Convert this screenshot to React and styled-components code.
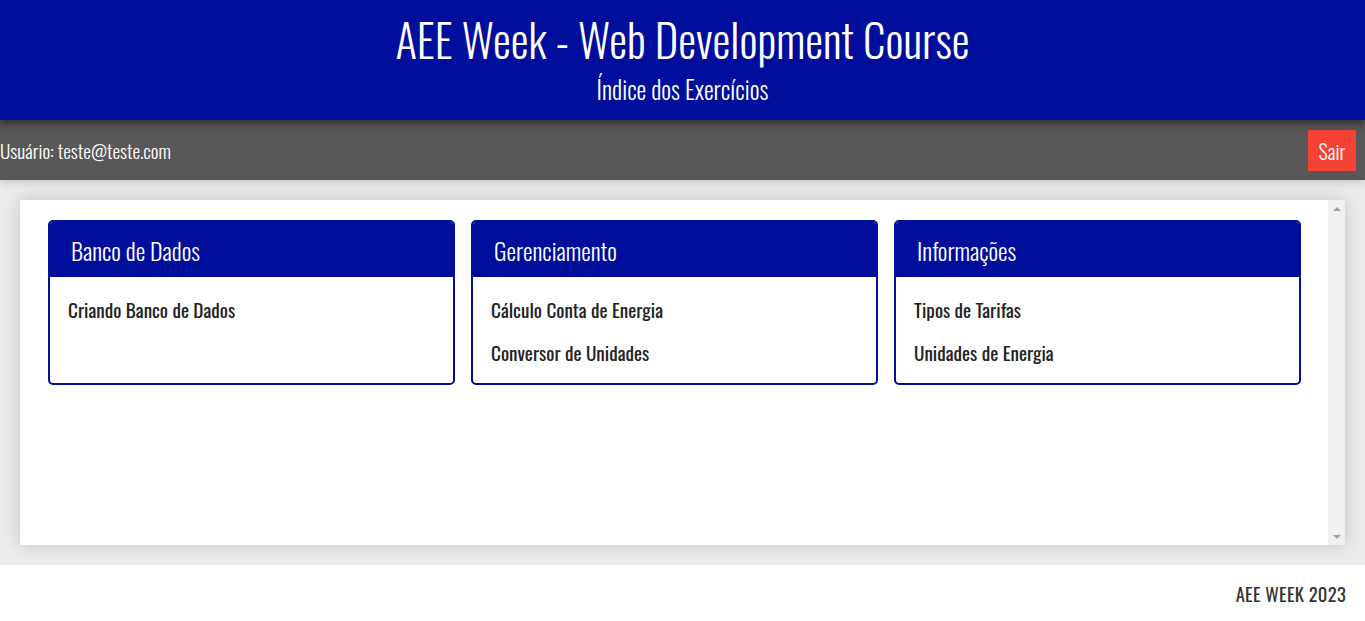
import React from 'react';
import styled, { createGlobalStyle } from 'styled-components';

const GlobalStyle = createGlobalStyle`
  html, body {
    margin: 0;
    padding: 0;
    height: 100%;
  }
  body {
    font-family: Oswald, "Liberation Sans Narrow", "DejaVu Sans Condensed", "DejaVu Sans", sans-serif;
    background: #fff;
  }
  #root {
    height: 100%;
  }
`;

const Page = styled.div`
  display: flex;
  flex-direction: column;
  height: 100vh;
`;

const Header = styled.header`
  position: relative;
  z-index: 2;
  height: 120px;
  background: #000e9c;
  color: #fff;
  display: flex;
  flex-direction: column;
  align-items: center;
  box-shadow: 0 4px 8px rgba(0, 0, 0, 0.45);
`;

const Title = styled.h1`
  margin: 11px 0 0;
  font-size: 45px;
  font-weight: 300;
  line-height: 56px;
`;

const Subtitle = styled.h2`
  margin: 7px 0 0;
  font-size: 24.5px;
  font-weight: 300;
  line-height: 30px;
`;

const UserBar = styled.div`
  position: relative;
  z-index: 1;
  height: 60px;
  background: #585858;
  color: #fff;
  display: flex;
  align-items: center;
  justify-content: space-between;
  padding: 0 9px 0 0;
  box-shadow: 0 3px 8px rgba(0, 0, 0, 0.15);
`;

const UserText = styled.span`
  font-size: 19.3px;
  font-weight: 300;
  margin-top: 1px;
`;

const LogoutButton = styled.button`
  height: 41px;
  width: 48px;
  border: none;
  background: #f44336;
  color: #fff;
  font-family: inherit;
  font-size: 20px;
  font-weight: 300;
  cursor: pointer;
  margin-top: 1px;
`;

const Main = styled.main`
  background: #ececec;
  padding: 20px 20px;
`;

const Panel = styled.section`
  height: 345px;
  background: #fff;
  display: flex;
  box-shadow: 0 0 16px rgba(0, 0, 0, 0.18);
`;

const PanelContent = styled.div`
  flex: 1;
  padding: 20px 27px 0 28px;
  overflow: hidden;
`;

const ScrollTrack = styled.div`
  width: 17px;
  background: #f1f1f1;
  display: flex;
  flex-direction: column;
  justify-content: space-between;
  align-items: center;
`;

const ScrollArrow = styled.div`
  width: 17px;
  height: 17px;
  display: flex;
  align-items: center;
  justify-content: center;

  &::before {
    content: '';
    width: 0;
    height: 0;
    border-left: 4px solid transparent;
    border-right: 4px solid transparent;
    ${(p) => (p.$down ? 'border-top: 4px solid #a3a3a3;' : 'border-bottom: 4px solid #a3a3a3;')}
  }
`;

const CardGrid = styled.div`
  display: grid;
  grid-template-columns: repeat(3, 1fr);
  gap: 16px;
`;

const Card = styled.div`
  border: 2px solid #000e9c;
  border-radius: 5px;
  height: 165px;
  box-sizing: border-box;
  overflow: hidden;
`;

const CardHeader = styled.div`
  background: #000e9c;
  color: #fff;
  height: 55px;
  display: flex;
  align-items: center;
  padding: 0 21px;
  font-size: 24px;
  font-weight: 300;
`;

const CardBody = styled.ul`
  list-style: none;
  margin: 0;
  padding: 20px 18px 0;
  display: flex;
  flex-direction: column;
  gap: 17px;
`;

const CardLink = styled.li`
  color: #222;
  font-size: 19.2px;
  line-height: 26px;
  font-weight: 400;
  cursor: pointer;
`;

const Footer = styled.footer`
  flex: 1;
  display: flex;
  justify-content: flex-end;
  align-items: center;
  padding: 0 19px 0 0;
  color: #333;
  font-size: 18.5px;
  letter-spacing: 0.3px;
`;

const sections = [
  { title: 'Banco de Dados', links: ['Criando Banco de Dados'] },
  { title: 'Gerenciamento', links: ['Cálculo Conta de Energia', 'Conversor de Unidades'] },
  { title: 'Informações', links: ['Tipos de Tarifas', 'Unidades de Energia'] },
];

export default function App() {
  return (
    <Page>
      <GlobalStyle />
      <Header>
        <Title>AEE Week - Web Development Course</Title>
        <Subtitle>Índice dos Exercícios</Subtitle>
      </Header>
      <UserBar>
        <UserText>Usuário: teste@teste.com</UserText>
        <LogoutButton>Sair</LogoutButton>
      </UserBar>
      <Main>
        <Panel>
          <PanelContent>
            <CardGrid>
              {sections.map((s) => (
                <Card key={s.title}>
                  <CardHeader>{s.title}</CardHeader>
                  <CardBody>
                    {s.links.map((l) => (
                      <CardLink key={l}>{l}</CardLink>
                    ))}
                  </CardBody>
                </Card>
              ))}
            </CardGrid>
          </PanelContent>
          <ScrollTrack>
            <ScrollArrow />
            <ScrollArrow $down />
          </ScrollTrack>
        </Panel>
      </Main>
      <Footer>AEE WEEK 2023</Footer>
    </Page>
  );
}
